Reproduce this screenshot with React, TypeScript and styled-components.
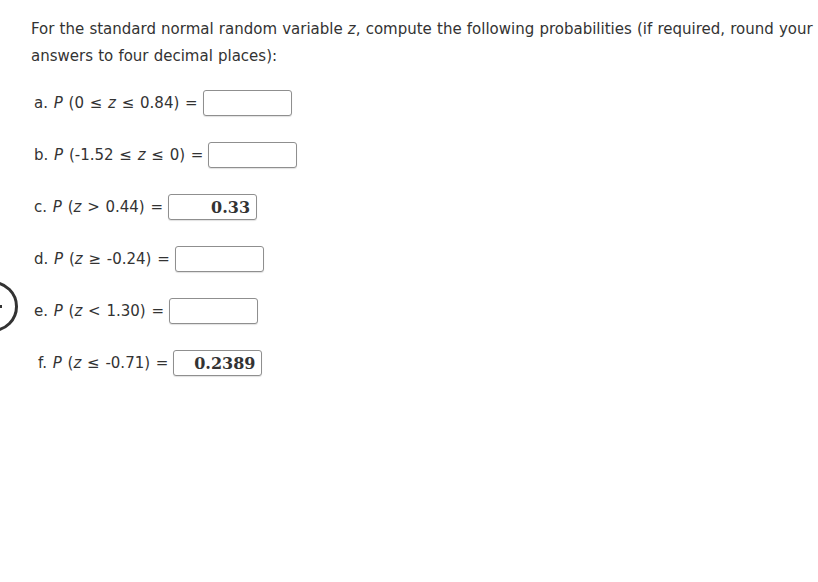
import styled, { createGlobalStyle } from 'styled-components'

const GlobalStyle = createGlobalStyle`
    *{
        box-sizing: border-box;
        margin: 0px;
        padding: 0px;
    }
    body{
        background: #ffffff;
        color: #333333;
        font-family: "DejaVu Sans", Verdana, sans-serif;
        font-size: 15px;
        overflow: hidden;
    }
`

const Page = styled.div`
    position: relative;
    width: 818px;
    height: 582px;
    padding: 16px 0px 0px 31px;
`

const Question = styled.p`
    line-height: 27px;
    white-space: nowrap;
    word-spacing: 0.4px;
`

const Parts = styled.div`
    display: flex;
    flex-direction: column;
    gap: 26px;
    margin-top: 20px;
`

const Row = styled.div<{ $indent?: number }>`
    display: flex;
    align-items: center;
    height: 26px;
    padding-left: ${p => 3 + (p.$indent || 0)}px;
`

const Label = styled.span`
    white-space: pre;
    word-spacing: 1px;
    em{
        font-style: italic;
    }
`

const AnswerBox = styled.div`
    width: 89px;
    height: 26px;
    margin-left: 5px;
    border: 1px solid #8f8f8f;
    border-radius: 3px;
    box-shadow: 0px 1px 1px rgba(0,0,0,0.12);
    background: #ffffff;
    display: flex;
    align-items: center;
    justify-content: flex-end;
    padding-right: 6px;
    font-family: "DejaVu Serif", Georgia, serif;
    font-weight: bold;
    font-size: 16px;
    color: #333333;
`

const NavCircle = styled.div`
    position: absolute;
    left: -33px;
    top: 281px;
    width: 51px;
    height: 51px;
    border: 3px solid #333333;
    border-radius: 50%;
    &::after{
        content: '';
        position: absolute;
        left: 30px;
        top: 21px;
        width: 2px;
        height: 3px;
        background: #333333;
    }
`

const parts = [
    { key: 'a', before: '(0 ≤ ', mid: ' ≤ 0.84)', value: '' },
    { key: 'b', before: '(-1.52 ≤ ', mid: ' ≤ 0)', value: '' },
    { key: 'c', before: '(', mid: ' > 0.44)', value: '0.33' },
    { key: 'd', before: '(', mid: ' ≥ -0.24)', value: '' },
    { key: 'e', before: '(', mid: ' < 1.30)', value: '' },
    { key: 'f', before: '(', mid: ' ≤ -0.71)', value: '0.2389', indent: 4 },
]

export default function App() {
    return (
        <>
            <GlobalStyle />
            <Page>
                <Question>
                    For the standard normal random variable <em>z</em>, compute the following probabilities (if required, round your
                    <br />
                    answers to four decimal places):
                </Question>
                <Parts>
                    {parts.map(part => (
                        <Row key={part.key} $indent={part.indent}>
                            <Label>
                                {part.key}. <em>P</em> {part.before}<em>z</em>{part.mid} =
                            </Label>
                            <AnswerBox>{part.value}</AnswerBox>
                        </Row>
                    ))}
                </Parts>
                <NavCircle />
            </Page>
        </>
    )
}
